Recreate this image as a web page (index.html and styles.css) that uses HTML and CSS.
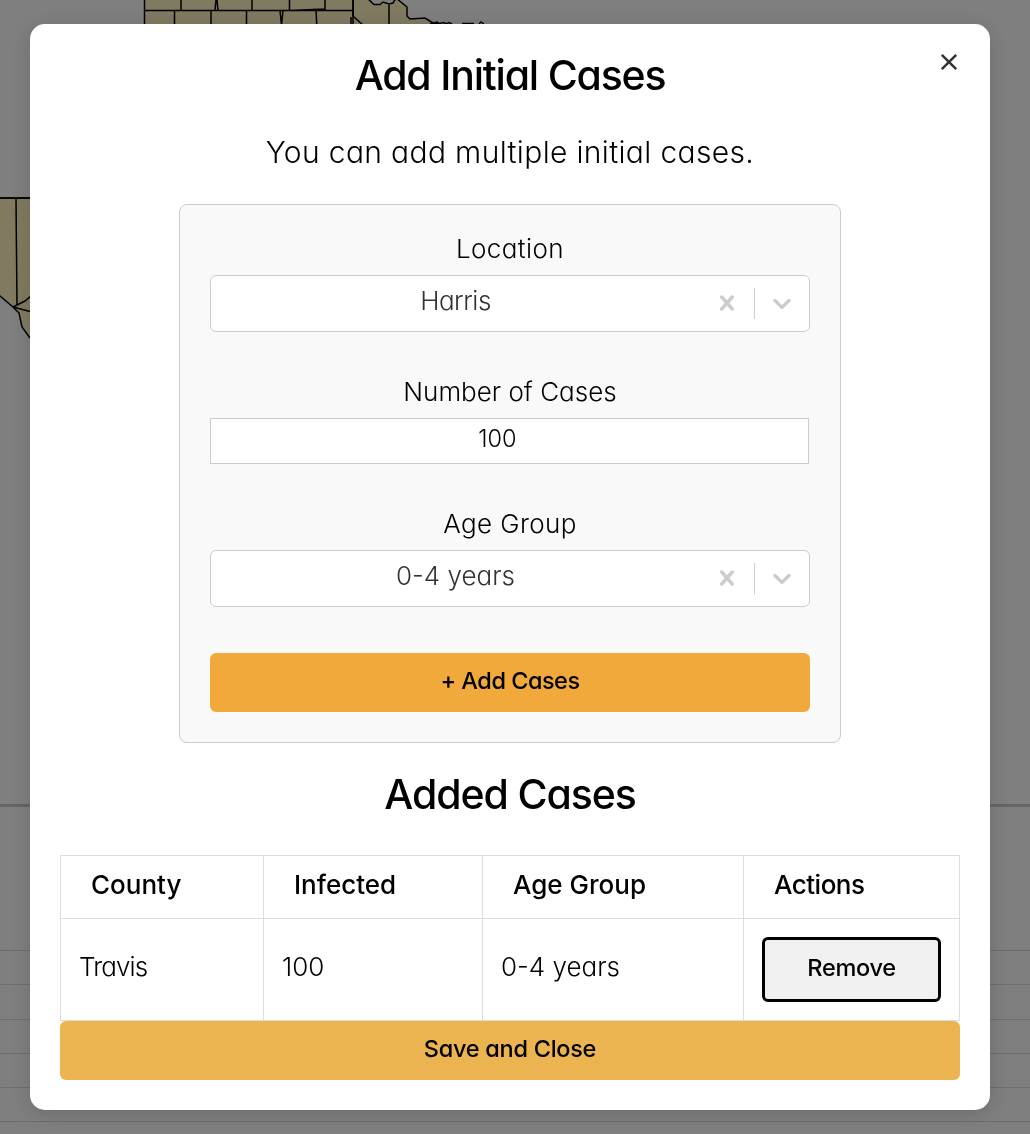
FILE: index.html
```html
<!DOCTYPE html>
<html lang="en">
<head>
<meta charset="utf-8">
<title>Add Initial Cases</title>
<link rel="stylesheet" href="styles.css">
</head>
<body>
<div class="page" aria-hidden="true">
  <div class="map-area">
    <svg class="map" width="1030" height="360" viewBox="0 0 1030 360">
      <g class="county">
        <path d="M144.500-2V30H353L364 26L363-2Z"/>
        <path d="M353-2V16L364 26H450L444 22.500L437 24L433 23L425 18L410 19L407 16V7L396-2L393 3L389 4L383 2L380 4.500H374L367-2Z"/>
        <path d="M-10 198H60V360L30 338L22 327L19 313L13 307L0 296L-10 288Z"/>
      </g>
      <g class="lines">
        <path d="M144.500 10.500H353M181 0V10.500M216 0L215 10.500M217 0L218 10.500M252 0V10.500M289.500 0V10.500M325 0V9L290 10.500M174.500 10.500V30M211 10.500V30M246.500 10.500V30M280 10.500L282 30M283 10.500L281 30M316 10.500L317 30M353 0V30M351 17V30M389 5V30M430 24L437 22L440 24M446 24L449 22.500L452 24M462 23.500H474M479 24L481 22L484 24"/>
        <path d="M0 198H60M16 198L17 305M13 307L25 301L32 295M13 307L32 312"/>
      </g>
    </svg>
  </div>
  <div class="summary"></div>
  <div class="row"></div><div class="row"></div><div class="row"></div><div class="row"></div><div class="row"></div><div class="row"></div>
</div>
<div class="backdrop"></div>
<main class="modal" role="dialog">
  <button class="close" aria-label="Close"><svg width="18" height="18" viewBox="0 0 18 18"><path d="M1.800 1.800L16.200 16.200M16.200 1.800L1.800 16.200"/></svg></button>
  <h2 class="title">Add Initial Cases</h2>
  <p class="intro">You can add multiple initial cases.</p>
  <form class="panel">
    <label class="label loose">Location</label>
    <div class="select">
      <div class="value tight">Harris</div>
      <div class="indicator"><svg width="30" height="30" viewBox="0 0 20 20"><path d="M14.348 14.849c-0.469 0.469-1.229 0.469-1.697 0l-2.651-3.030-2.651 3.029c-0.469 0.469-1.229 0.469-1.697 0-0.469-0.469-0.469-1.229 0-1.697l2.758-3.150-2.759-3.152c-0.469-0.469-0.469-1.228 0-1.697s1.228-0.469 1.697 0l2.652 3.031 2.651-3.031c0.469-0.469 1.228-0.469 1.697 0s0.469 1.229 0 1.697l-2.758 3.152 2.758 3.150c0.469 0.469 0.469 1.229 0 1.698z"/></svg></div>
      <div class="separator"></div>
      <div class="indicator"><svg width="30" height="30" viewBox="0 0 20 20"><path d="M4.516 7.548c0.436-0.446 1.043-0.481 1.576 0l3.908 3.747 3.908-3.747c0.533-0.481 1.141-0.446 1.574 0 0.436 0.445 0.408 1.197 0 1.615-0.406 0.418-4.695 4.502-4.695 4.502-0.217 0.223-0.502 0.335-0.787 0.335s-0.570-0.112-0.789-0.335c0 0-4.287-4.084-4.695-4.502s-0.436-1.170 0-1.615z"/></svg></div>
    </div>
    <label class="label">Number of Cases</label>
    <div class="input">100</div>
    <label class="label loose">Age Group</label>
    <div class="select">
      <div class="value">0-4 years</div>
      <div class="indicator"><svg width="30" height="30" viewBox="0 0 20 20"><path d="M14.348 14.849c-0.469 0.469-1.229 0.469-1.697 0l-2.651-3.030-2.651 3.029c-0.469 0.469-1.229 0.469-1.697 0-0.469-0.469-0.469-1.229 0-1.697l2.758-3.150-2.759-3.152c-0.469-0.469-0.469-1.228 0-1.697s1.228-0.469 1.697 0l2.652 3.031 2.651-3.031c0.469-0.469 1.228-0.469 1.697 0s0.469 1.229 0 1.697l-2.758 3.152 2.758 3.150c0.469 0.469 0.469 1.229 0 1.698z"/></svg></div>
      <div class="separator"></div>
      <div class="indicator"><svg width="30" height="30" viewBox="0 0 20 20"><path d="M4.516 7.548c0.436-0.446 1.043-0.481 1.576 0l3.908 3.747 3.908-3.747c0.533-0.481 1.141-0.446 1.574 0 0.436 0.445 0.408 1.197 0 1.615-0.406 0.418-4.695 4.502-4.695 4.502-0.217 0.223-0.502 0.335-0.787 0.335s-0.570-0.112-0.789-0.335c0 0-4.287-4.084-4.695-4.502s-0.436-1.170 0-1.615z"/></svg></div>
    </div>
    <button type="button" class="button add">+ Add Cases</button>
  </form>
  <h2 class="title added">Added Cases</h2>
  <table class="cases">
    <colgroup><col class="c1"><col class="c2"><col class="c3"><col></colgroup>
    <thead><tr><th>County</th><th>Infected</th><th>Age Group</th><th class="tight">Actions</th></tr></thead>
    <tbody><tr><td class="name">Travis</td><td>100</td><td>0-4 years</td><td class="action"><button class="remove">Remove</button></td></tr></tbody>
  </table>
  <button class="button save">Save and Close</button>
</main>
</body>
</html>
```
FILE: styles.css
```css
* { box-sizing: border-box; }
body {
  margin: 0;
  height: 1134px;
  overflow: hidden;
  background: #fff;
  color: #000;
  font-family: Inter, "Liberation Sans", sans-serif;
  font-feature-settings: "cv11";
  font-weight: 300;
}
h2, p { margin: 0; }
button { font: inherit; color: inherit; font-feature-settings: inherit; padding: 0; border: 0; }

.page { height: 1134px; overflow: hidden; }
.map-area { height: 807px; border-bottom: 3px solid #ccc; }
.map { display: block; }
.county path { fill: #fef4c0; stroke: #000; stroke-width: 1.5; }
.lines path { fill: none; stroke: #000; stroke-width: 1.5; }
.summary { height: 143px; }
.row { height: 34.300px; border-top: 1px solid #ddd; }

.backdrop { position: fixed; inset: 0; background: rgba(0, 0, 0, 0.5); }
.modal {
  position: absolute;
  left: 30px;
  top: 24px;
  width: 960px;
  height: 1086px;
  padding: 30px;
  background: #fff;
  border-radius: 15px;
  box-shadow: 0 4px 20px rgba(0, 0, 0, 0.14);
}
.close { position: absolute; right: 32px; top: 29px; width: 18px; height: 18px; background: none; }
.close svg { display: block; }
.close path { stroke: #333; stroke-width: 2.500; }

.title { font-size: 41px; line-height: 42px; font-weight: 500; letter-spacing: -1.2px; text-align: center; }
.intro { margin-top: 41px; font-size: 30px; line-height: 30px; letter-spacing: 0.35px; text-align: center; }

.panel {
  width: 662px;
  height: 539px;
  margin: 37px auto 0;
  padding: 30px;
  border: 1px solid #ccc;
  border-radius: 8px;
  background: #f9f9f9;
}
.label { display: block; height: 40px; font-size: 26px; line-height: 28px; text-align: center; }
.loose { letter-spacing: 0.4px; }
.tight { letter-spacing: -0.5px; }
.select {
  display: flex;
  align-items: flex-start;
  height: 57px;
  margin-bottom: 46px;
  border: 1px solid #ccc;
  border-radius: 6px;
  background: #fff;
}
.value { flex: 1; padding-top: 10px; font-size: 26px; line-height: 30px; text-align: center; color: #333; }
.indicator { padding: 12px; }
.indicator svg { display: block; fill: #ccc; }
.separator { width: 1px; height: 31px; margin-top: 12px; background: #ccc; }
.input {
  width: 599px;
  height: 46px;
  margin-bottom: 46px;
  padding-right: 24px;
  border: 1px solid #ccc;
  background: #fff;
  font-size: 23.500px;
  line-height: 40px;
  text-align: center;
}
.button {
  display: block;
  width: 100%;
  height: 59px;
  padding-bottom: 4px;
  border-radius: 6px;
  font-size: 23.500px;
  font-weight: 500;
}
.add { background: #f2a93b; letter-spacing: -0.5px; }
.save { background: #ecb351; letter-spacing: -0.27px; }
.added { margin-top: 30px; letter-spacing: -1.1px; }

.cases { width: 900px; height: 166px; margin-top: 40px; border-collapse: collapse; table-layout: fixed; }
.cases th, .cases td { padding: 0; border: 1px solid #ddd; text-align: left; font-size: 26px; line-height: 30px; }
.cases th { height: 63px; padding: 0 0 4px 30px; font-weight: 500; }
.cases td { height: 102px; padding: 0 0 5px 18px; }
.cases .name { letter-spacing: -0.9px; }
.cases .action { padding-bottom: 0; }
.c1 { width: 203px; }
.c2 { width: 219px; }
.c3 { width: 261px; }
.remove {
  display: block;
  width: 179px;
  height: 65px;
  padding-bottom: 3px;
  border: 3px solid #000;
  border-radius: 6px;
  background: #f0f0f0;
  font-size: 23.500px;
  font-weight: 500;
  letter-spacing: -0.3px;
}
```
